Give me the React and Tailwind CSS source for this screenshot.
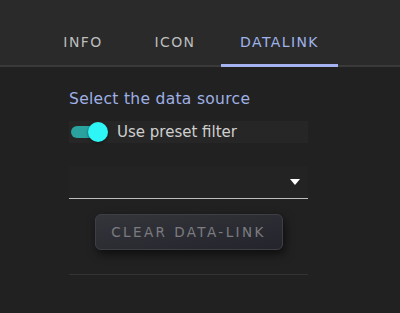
export default function App() {
  const tabs = ["INFO", "ICON", "DATALINK"];
  const active = 2;

  return (
    <div className="w-[400px] h-[313px] bg-[#212121] font-['DejaVu_Sans',sans-serif] overflow-hidden">
      {/* tab bar */}
      <div className="h-[67px] bg-[#2a2a2a] border-b-2 border-[#3a3a3a] flex items-end">
        <div className="flex ml-[37px]">
          {tabs.map((t, i) => (
            <div
              key={t}
              className={`relative h-[46px] flex items-center justify-center text-[14px] tracking-[0.1em] ${
                i === active ? "w-[117px] text-[#9fb3ea]" : "w-[92px] text-[#bdbdbd]"
              }`}
            >
              {t}
              {i === active && (
                <div className="absolute left-0 right-0 bottom-[-2px] h-[3px] bg-[#a5b4f0]" />
              )}
            </div>
          ))}
        </div>
      </div>

      <div className="w-[239px] ml-[69px] flex flex-col">
        <div className="mt-[21px] text-[15.5px] text-[#9fb0e4] tracking-[0.02em] leading-[22px]">
          Select the data source
        </div>

        {/* toggle row */}
        <div className="mt-[11px] h-[22px] bg-[#262626] flex items-center">
          <div className="relative w-[35px] h-[12px] ml-[2px] rounded-full bg-[#2aa39f]">
            <div className="absolute right-[-2px] top-[-4px] w-[20px] h-[20px] rounded-full bg-[#2ef6f6] shadow-[0_1px_3px_rgba(0,0,0,0.5)]" />
          </div>
          <span className="ml-[11px] text-[15px] text-[#cfcfcf]">Use preset filter</span>
        </div>

        {/* select */}
        <div className="mt-[23px] h-[33px] bg-[#232323] border-b-[1.5px] border-[#bdbdbd] flex items-center justify-end pr-[8px]">
          <svg width="10" height="6" viewBox="0 0 10 6">
            <path d="M0 0h10L5 6z" fill="#ffffff" />
          </svg>
        </div>

        {/* button */}
        <div className="flex justify-center mt-[15px]">
          <button className="w-[188px] h-[36px] rounded-[6px] bg-gradient-to-br from-[#34353b] to-[#24252c] border border-[#3e3f45] shadow-[2px_4px_10px_rgba(0,0,0,0.6)] text-[13.5px] text-[#7c7c80] tracking-[0.18em]">
            CLEAR DATA-LINK
          </button>
        </div>

        <div className="mt-[24px] h-px bg-[#333333]" />
      </div>
    </div>
  );
}
